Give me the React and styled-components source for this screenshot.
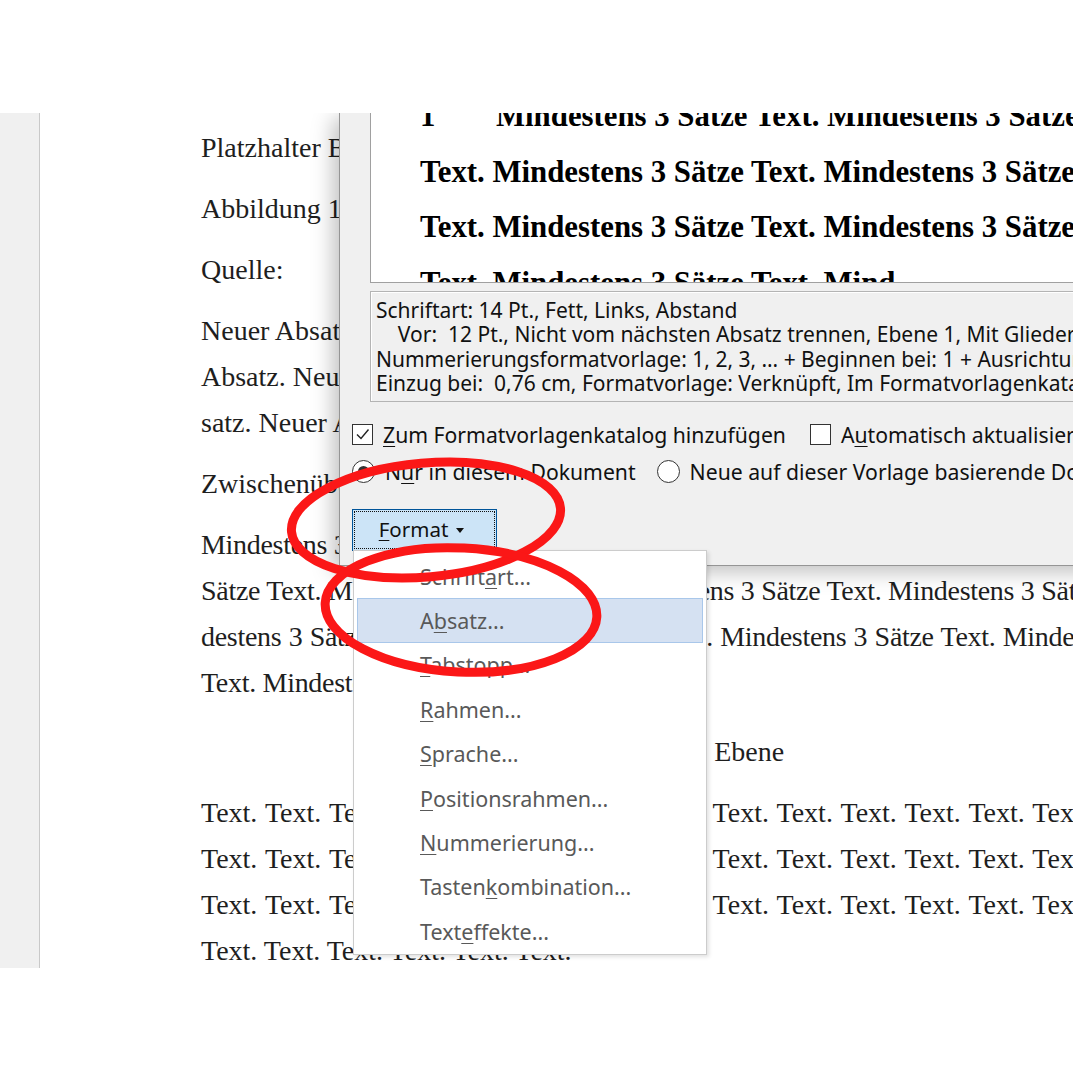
import React from "react";
import styled, { createGlobalStyle } from "styled-components";

const GlobalStyle = createGlobalStyle`
  html, body {
    margin: 0;
    padding: 0;
    background: #fff;
  }
  body {
    font-family: "Noto Sans", "Open Sans", sans-serif;
  }
`;

const Page = styled.div`
  width: 1080px;
  height: 1080px;
  padding-top: 113px;
  box-sizing: border-box;
  background: #fff;
`;

const Shot = styled.div`
  position: relative;
  width: 1073px;
  height: 855px;
  display: flex;
  overflow: hidden;
`;

const Gutter = styled.div`
  width: 39px;
  flex: none;
  background: #f0f0f0;
  border-right: 1px solid #c9c9c9;
`;

const DocPage = styled.div`
  flex: 1;
  min-width: 0;
  background: #fff;
  padding: 12px 0 0 161px;
  font-family: "Liberation Serif", "Times New Roman", serif;
  font-size: 28px;
  line-height: 46px;
  color: #1e1e1e;
  white-space: nowrap;
  overflow: hidden;
`;

const Para = styled.div`
  margin-top: ${(p) => (p.$gap === undefined ? 15 : p.$gap)}px;
  padding-left: ${(p) => p.$indent || 0}px;
  letter-spacing: ${(p) => p.$tight || 0}px;
  word-spacing: ${(p) => p.$spread || 0}px;
`;

const Line = styled.div`
  word-spacing: ${(p) => p.$spread || 0}px;
`;

/* ---------- dialog ---------- */

const Dialog = styled.div`
  position: absolute;
  left: 339px;
  top: -1px;
  width: 780px;
  height: 454px;
  box-sizing: border-box;
  background: #f0f0f0;
  border: 1px solid #959595;
  box-shadow: -6px 6px 20px rgba(0, 0, 0, 0.25);
  padding-left: 12px;
  display: flex;
  flex-direction: column;
`;

const Preview = styled.div`
  margin-left: 18px;
  height: 169px;
  flex: none;
  background: #fff;
  border-left: 1px solid #a0a0a0;
  border-bottom: 1px solid #a0a0a0;
  padding-left: 49px;
  overflow: hidden;
  font-family: "Liberation Serif", "Times New Roman", serif;
  font-weight: bold;
  font-size: 30.8px;
  line-height: 55.5px;
  color: #000;
  white-space: nowrap;
`;

const PreviewInner = styled.div`
  margin-top: -24px;
`;

const Num = styled.span`
  display: inline-block;
  width: 76px;
`;

const Description = styled.div`
  margin: 8px 0 0 18px;
  height: 111px;
  flex: none;
  box-sizing: border-box;
  border: 1px solid #b4b4b4;
  box-shadow: inset 1px 1px 0 #fff;
  padding: 6px 0 0 5px;
  font-size: 21px;
  line-height: 24.3px;
  color: #111;
  white-space: pre;
  overflow: hidden;
`;

const OptionRow = styled.div`
  display: flex;
  align-items: center;
  height: 23px;
  margin-top: ${(p) => p.$gap}px;
  font-size: 21.2px;
  color: #111;
  white-space: nowrap;
`;

const Option = styled.label`
  display: flex;
  align-items: center;
  gap: 10px;
  margin-right: ${(p) => p.$space || 0}px;
`;

const Check = styled.span`
  width: 19px;
  height: 19px;
  flex: none;
  background: #fff;
  border: 1px solid #333;
  display: flex;
  align-items: center;
  justify-content: center;
`;

const Radio = styled.span`
  width: 21px;
  height: 21px;
  flex: none;
  border-radius: 50%;
  background: #fff;
  border: 1px solid #333;
  display: flex;
  align-items: center;
  justify-content: center;
  &::after {
    content: "";
    width: 11px;
    height: 11px;
    border-radius: 50%;
    background: ${(p) => (p.$on ? "#333" : "transparent")};
  }
`;

const Key = styled.span`
  text-decoration: underline;
  text-underline-offset: 3px;
  text-decoration-thickness: 1px;
`;

const FormatButton = styled.button`
  margin-top: 26px;
  width: 145px;
  height: 42px;
  flex: none;
  box-sizing: border-box;
  background: #cce4f7;
  border: 1px solid #005499;
  outline: 1px dotted #111;
  outline-offset: -3px;
  font-family: "Noto Sans", "Open Sans", sans-serif;
  font-size: 20.5px;
  color: #111;
  display: flex;
  align-items: center;
  justify-content: center;
  gap: 8px;
  padding: 0 6px 2px 0;
`;

const Caret = styled.span`
  width: 0;
  height: 0;
  border-left: 4px solid transparent;
  border-right: 4px solid transparent;
  border-top: 5px solid #111;
  margin-top: 3px;
`;

/* ---------- dropdown ---------- */

const Menu = styled.div`
  position: absolute;
  left: 353px;
  top: 437px;
  width: 354px;
  height: 405px;
  box-sizing: border-box;
  background: #fff;
  border: 1px solid #cccccc;
  box-shadow: 2px 2px 4px rgba(0, 0, 0, 0.12);
  padding: 3px 3px 0;
  font-size: 21.5px;
  color: #595959;
`;

const MenuItem = styled.div`
  height: 44.4px;
  box-sizing: border-box;
  display: flex;
  align-items: center;
  padding-left: 62px;
  background: ${(p) => (p.$active ? "#d5e1f2" : "transparent")};
  border: 1px solid ${(p) => (p.$active ? "#a9c7ea" : "transparent")};
`;

const Marks = styled.svg`
  position: absolute;
  left: 0;
  top: 0;
  pointer-events: none;
`;

const CheckIcon = () => (
  <svg width="15" height="15" viewBox="0 0 15 15">
    <polyline points="2,7.5 6,11.5 13.5,2.5" fill="none" stroke="#222" strokeWidth="1.4" />
  </svg>
);

const menuItems = [
  ["Schrift", "a", "rt..."],
  ["A", "b", "satz..."],
  ["", "T", "abstopp..."],
  ["", "R", "ahmen..."],
  ["", "S", "prache..."],
  ["", "P", "ositionsrahmen..."],
  ["", "N", "ummerierung..."],
  ["Tasten", "k", "ombination..."],
  ["Text", "e", "ffekte..."],
];

const unit = "Mindestens 3 Sätze Text. ";
const textRun = "Text. ".repeat(16);

export default function App() {
  return (
    <Page>
      <GlobalStyle />
      <Shot>
        <Gutter />
        <DocPage>
          <Para $gap={0}>Platzhalter Bild</Para>
          <Para>Abbildung 1: Platzhalter</Para>
          <Para>Quelle:</Para>
          <Para>
            <Line>Neuer Absatz. Neuer Absatz. Neuer Absatz. Neuer Absatz.</Line>
            <Line>Absatz. Neuer Absatz. Neuer Absatz. Neuer Absatz. Neuer Ab-</Line>
            <Line>satz. Neuer Absatz.</Line>
          </Para>
          <Para>Zwischenüberschrift</Para>
          <Para $tight={-0.3}>
            <Line>{unit + unit + unit}Mindestens 3</Line>
            <Line>Sätze Text. {unit + unit + unit}</Line>
            <Line $spread={0.6}>destens 3 Sätze Text. {unit + unit + unit}</Line>
            <Line>Text. Mindestens 3 Sätze Text.</Line>
          </Para>
          <Para $gap={23} $indent={188} $spread={4}>
            Zwischenüberschrift zweite Ebene
          </Para>
          <Para>
            <Line $spread={1.1}>{textRun}</Line>
            <Line $spread={1.1}>{textRun}</Line>
            <Line $spread={1.1}>{textRun}</Line>
            <Line>Text. Text. Text. Text. Text. Text.</Line>
          </Para>
        </DocPage>

        <Dialog>
          <Preview>
            <PreviewInner>
              <div>
                <Num>1</Num>Mindestens 3 Sätze Text. Mindestens 3 Sätze Text.
              </div>
              <div>Text. Mindestens 3 Sätze Text. Mindestens 3 Sätze Text.</div>
              <div>Text. Mindestens 3 Sätze Text. Mindestens 3 Sätze Text.</div>
              <div>Text. Mindestens 3 Sätze Text. Mind</div>
            </PreviewInner>
          </Preview>
          <Description>
            {"Schriftart: 14 Pt., Fett, Links, Abstand\n"}
            {"    Vor:  12 Pt., Nicht vom nächsten Absatz trennen, Ebene 1, Mit Gliederung\n"}
            {"Nummerierungsformatvorlage: 1, 2, 3, … + Beginnen bei: 1 + Ausrichtung: Links\n"}
            {"Einzug bei:  0,76 cm, Formatvorlage: Verknüpft, Im Formatvorlagenkatalog anzeigen"}
          </Description>
          <OptionRow $gap={21}>
            <Option $space={24}>
              <Check>
                <CheckIcon />
              </Check>
              <span>
                <Key>Z</Key>um Formatvorlagenkatalog hinzufügen
              </span>
            </Option>
            <Option>
              <Check />
              <span>
                A<Key>u</Key>tomatisch aktualisieren
              </span>
            </Option>
          </OptionRow>
          <OptionRow $gap={14}>
            <Option $space={21}>
              <Radio $on />
              <span>
                N<Key>u</Key>r in diesem Dokument
              </span>
            </Option>
            <Option>
              <Radio />
              <span>Neue auf dieser Vorlage basierende Dokumente</span>
            </Option>
          </OptionRow>
          <FormatButton>
            <span>
              <Key>F</Key>ormat
            </span>
            <Caret />
          </FormatButton>
        </Dialog>

        <Menu>
          {menuItems.map(([pre, key, post], i) => (
            <MenuItem key={i} $active={i === 1}>
              <span>
                {pre}
                <Key>{key}</Key>
                {post}
              </span>
            </MenuItem>
          ))}
        </Menu>

        <Marks width="1073" height="855" viewBox="0 0 1073 855">
          <ellipse
            cx="426"
            cy="407"
            rx="135"
            ry="57"
            transform="rotate(-5 426 407)"
            fill="none"
            stroke="#fb1717"
            strokeWidth="9"
          />
          <ellipse
            cx="461"
            cy="497"
            rx="136"
            ry="62"
            transform="rotate(3 461 497)"
            fill="none"
            stroke="#fb1717"
            strokeWidth="9"
          />
        </Marks>
      </Shot>
    </Page>
  );
}
